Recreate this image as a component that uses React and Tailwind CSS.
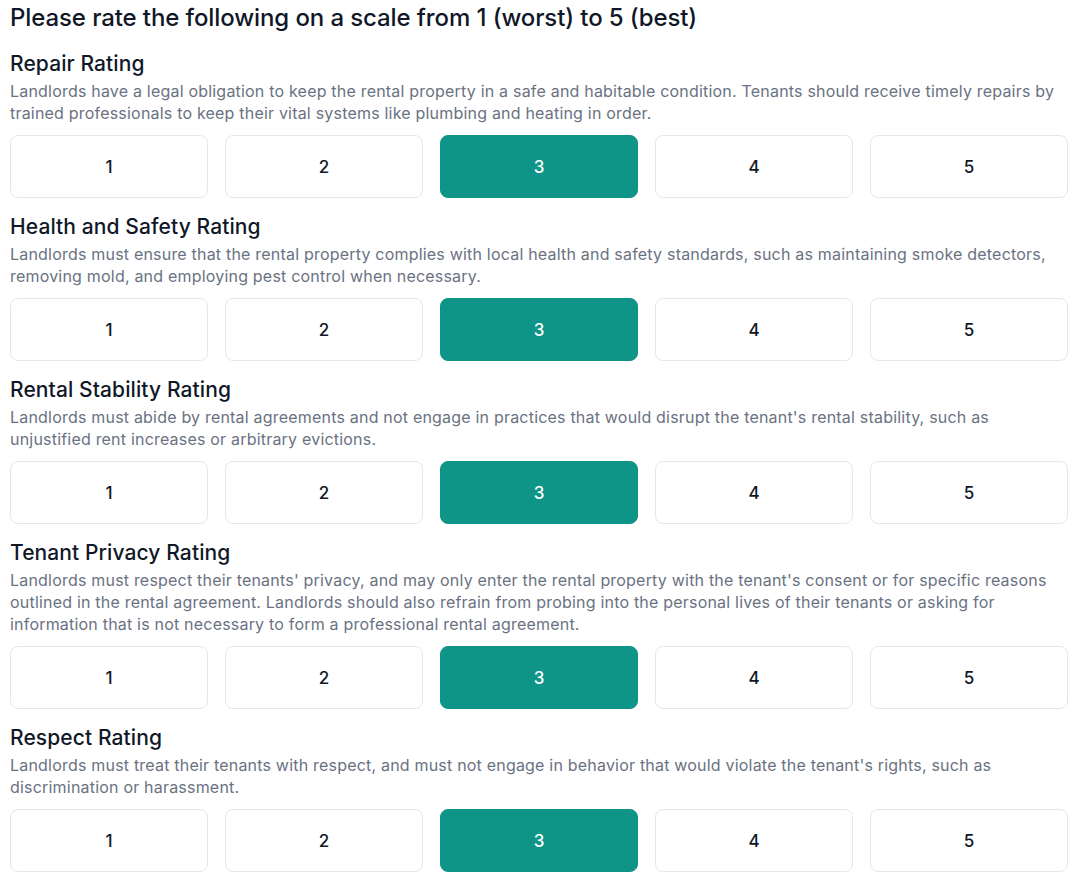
import { useState } from 'react'

const CRITERIA = [
  {
    id: 'repair',
    title: 'Repair Rating',
    text: 'Landlords have a legal obligation to keep the rental property in a safe and habitable condition. Tenants should receive timely repairs by trained professionals to keep their vital systems like plumbing and heating in order.',
  },
  {
    id: 'health',
    title: 'Health and Safety Rating',
    text: 'Landlords must ensure that the rental property complies with local health and safety standards, such as maintaining smoke detectors, removing mold, and employing pest control when necessary.',
  },
  {
    id: 'stability',
    title: 'Rental Stability Rating',
    text: "Landlords must abide by rental agreements and not engage in practices that would disrupt the tenant's rental stability, such as unjustified rent increases or arbitrary evictions.",
  },
  {
    id: 'privacy',
    title: 'Tenant Privacy Rating',
    text: "Landlords must respect their tenants' privacy, and may only enter the rental property with the tenant's consent or for specific reasons outlined in the rental agreement. Landlords should also refrain from probing into the personal lives of their tenants or asking for information that is not necessary to form a professional rental agreement.",
  },
  {
    id: 'respect',
    title: 'Respect Rating',
    text: "Landlords must treat their tenants with respect, and must not engage in behavior that would violate the tenant's rights, such as discrimination or harassment.",
  },
]

const SCORES = [1, 2, 3, 4, 5]

function RatingRow({ value, onChange }) {
  return (
    <div className="grid grid-cols-5 gap-[17px] mt-[11px]">
      {SCORES.map(n => (
        <button
          key={n}
          onClick={() => onChange(n)}
          className={`h-[63px] pt-[3px] rounded-lg border text-[17px] font-medium ${
            value === n
              ? 'bg-[#0f9488] border-[#0f9488] text-white'
              : 'bg-white border-gray-200 text-gray-900 hover:bg-gray-50'
          }`}
        >
          {n}
        </button>
      ))}
    </div>
  )
}

export default function App() {
  const [ratings, setRatings] = useState(
    Object.fromEntries(CRITERIA.map(c => [c.id, 3]))
  )

  return (
    <div className="bg-white min-h-screen pl-[10px] pr-[12px] pt-[2px] text-gray-900 font-['Inter',sans-serif]">
      <h1 className="text-2xl leading-8 font-medium tracking-[-0.1px]">
        Please rate the following on a scale from 1 (worst) to 5 (best)
      </h1>
      <div className="mt-[16px] flex flex-col gap-[15px]">
        {CRITERIA.map(c => (
          <section key={c.id}>
            <h2 className="text-[21px] leading-7 font-medium tracking-[0.1px]">{c.title}</h2>
            <p className="mt-[2px] text-base leading-[22px] text-gray-500 tracking-[0.2px]">{c.text}</p>
            <RatingRow
              value={ratings[c.id]}
              onChange={n => setRatings(r => ({ ...r, [c.id]: n }))}
            />
          </section>
        ))}
      </div>
    </div>
  )
}
